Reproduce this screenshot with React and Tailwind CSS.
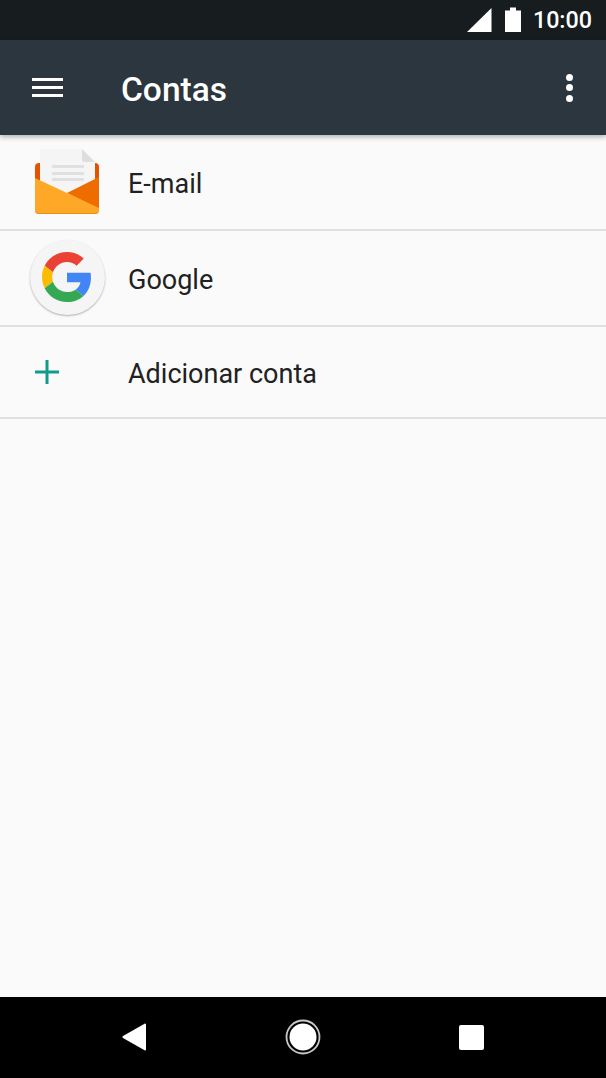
import React from "react";

const accounts = [
  { name: "E-mail", icon: <MailIcon /> },
  { name: "Google", icon: <GoogleIcon /> },
];

function MailIcon() {
  return (
    <svg width="66" height="68" viewBox="0 0 66 68" className="ml-[34px]">
      <path d="M1 19a4 4 0 0 1 4-4h56a4 4 0 0 1 4 4v24H1z" fill="#e65100" />
      <path d="M6 1h42l13 13v40H6z" fill="#f5f5f5" />
      <path d="M48 1l13 13H50a2 2 0 0 1-2-2z" fill="#dedede" />
      <rect x="18" y="17" width="32" height="3" fill="#e0e0e0" />
      <rect x="18" y="24" width="32" height="3" fill="#e0e0e0" />
      <rect x="18" y="30" width="32" height="3" fill="#e0e0e0" />
      <path d="M33 45l32-16v32z" fill="#ef6c00" />
      <path d="M1 30l64 30v2a4 4 0 0 1-4 4H5a4 4 0 0 1-4-4z" fill="#ffa726" />
      <path d="M1 62a4 4 0 0 0 4 4h56a4 4 0 0 0 4-4v-1a4 4 0 0 1-4 4H5a4 4 0 0 1-4-4z" fill="#e88f1a" />
    </svg>
  );
}

function GoogleIcon() {
  return (
    <div className="mb-[2px] ml-[30px] flex h-[75px] w-[75px] items-center justify-center rounded-full bg-[#f5f5f5] shadow-[0_1px_2px_rgba(0,0,0,0.3)]">
      <svg width="50" height="50" viewBox="0 0 48 48" className="mr-[2px]">
        <path fill="#EA4335" d="M24 9.5c3.54 0 6.71 1.22 9.21 3.6l6.85-6.85C35.9 2.38 30.47 0 24 0 14.62 0 6.51 5.38 2.56 13.22l7.98 6.19C12.43 13.72 17.74 9.5 24 9.5z" />
        <path fill="#4285F4" d="M46.98 24.55c0-1.57-.15-3.09-.38-4.55H24v9.02h12.94c-.58 2.96-2.26 5.48-4.78 7.18l7.73 6c4.51-4.18 7.09-10.36 7.09-17.65z" />
        <path fill="#FBBC05" d="M10.53 28.59c-.48-1.45-.76-2.99-.76-4.59s.27-3.14.76-4.59l-7.98-6.19C.92 16.46 0 20.12 0 24c0 3.88.92 7.54 2.56 10.78l7.97-6.19z" />
        <path fill="#34A853" d="M24 48c6.48 0 11.93-2.13 15.89-5.81l-7.73-6c-2.15 1.45-4.92 2.3-8.16 2.3-6.26 0-11.57-4.22-13.47-9.91l-7.98 6.19C6.51 42.62 14.62 48 24 48z" />
      </svg>
    </div>
  );
}

const App = () => {
  return (
    <div className="flex h-[1078px] w-[606px] flex-col overflow-hidden bg-[#fafafa] font-['Roboto',sans-serif]">
      {/* status bar */}
      <div className="flex h-[40px] items-center justify-end bg-[#171c1f] pr-[14px]">
        <svg width="26" height="26" viewBox="0 0 26 26" className="mr-[13px]">
          <path d="M1 25L25.5 1v24z" fill="#fff" />
        </svg>
        <svg width="16" height="26" viewBox="0 0 16 26" className="mr-[12px]">
          <path d="M0 3.5h5V.5h6v3h5V25H0z" fill="#fff" />
        </svg>
        <span className="mt-[2px] text-[23.3px] font-medium leading-none text-white">10:00</span>
      </div>

      {/* toolbar */}
      <div className="relative z-10 flex h-[95px] items-center bg-[#2b363e] shadow-[0_2px_5px_rgba(0,0,0,0.3)]">
        <div className="ml-[32px] flex w-[31px] flex-col gap-[5px]">
          <div className="h-[3px] bg-white" />
          <div className="h-[3px] bg-white" />
          <div className="h-[3px] bg-white" />
        </div>
        <span className="ml-[58px] mt-[4px] text-[33.5px] font-medium leading-none text-white">Contas</span>
        <div className="ml-auto mr-[33px] flex flex-col gap-[3.5px]">
          <div className="h-[7px] w-[7px] rounded-full bg-white" />
          <div className="h-[7px] w-[7px] rounded-full bg-white" />
          <div className="h-[7px] w-[7px] rounded-full bg-white" />
        </div>
      </div>

      {/* list */}
      {accounts.map((account) => (
        <div key={account.name} className="flex h-[96px] items-center border-b-2 border-[#e0e0e0]">
          <div className="w-[128px] shrink-0">{account.icon}</div>
          <span className="mt-[4px] text-[27px] leading-none text-[#212121]">{account.name}</span>
        </div>
      ))}
      <div className="flex h-[92px] items-center border-b-2 border-[#e0e0e0]">
        <div className="w-[128px] shrink-0">
          <svg width="26" height="26" viewBox="0 0 26 26" className="ml-[34px] mb-[1px]">
            <path d="M11.5 1h3v10.5H25v3H14.5V25h-3V14.5H1v-3h10.5z" fill="#149a8b" />
          </svg>
        </div>
        <span className="mt-[4px] text-[27px] leading-none text-[#212121]">Adicionar conta</span>
      </div>

      <div className="flex-1" />

      {/* nav bar */}
      <div className="flex h-[81px] items-center bg-black">
        <svg width="26" height="30" viewBox="0 0 26 30" className="ml-[121px] mb-[1px]">
          <path d="M24 1.5a1 1 0 0 1 1 1v25a1 1 0 0 1-1 1L2 16a1.2 1.2 0 0 1 0-2z" fill="#fff" />
        </svg>
        <svg width="36" height="36" viewBox="0 0 36 36" className="ml-[138px] mb-[1px]">
          <circle cx="18" cy="18" r="16.5" fill="none" stroke="#c8c8c8" strokeWidth="1.8" />
          <circle cx="18" cy="18" r="13.5" fill="#fff" />
        </svg>
        <div className="ml-[138px] mb-[1px] h-[25px] w-[25px] rounded-[2px] bg-white" />
      </div>
    </div>
  );
};

export default App;
